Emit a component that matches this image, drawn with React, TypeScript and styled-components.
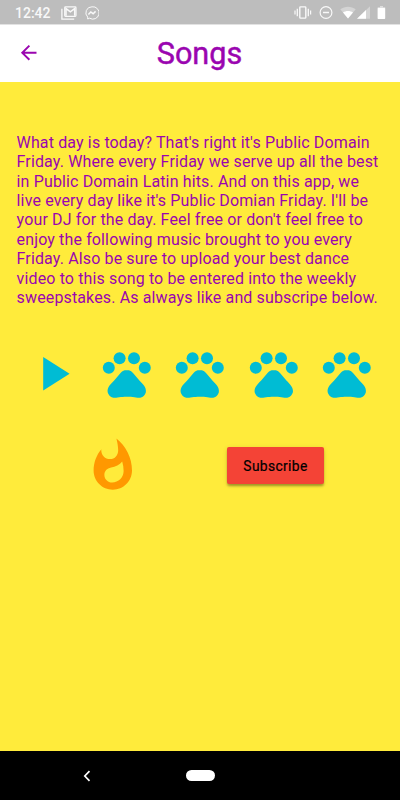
import React from "react";
import styled, { createGlobalStyle } from "styled-components";
import { MdArrowBack, MdPets, MdPlayArrow, MdWhatshot } from "react-icons/md";

const GlobalStyle = createGlobalStyle`
  * { box-sizing: border-box; }
  body { margin: 0; font-family: Roboto, sans-serif; }
`;

const Screen = styled.div`
  display: flex;
  flex-direction: column;
  width: 400px;
  height: 800px;
  overflow: hidden;
  background: #ffeb3b;
`;

const StatusBar = styled.div`
  display: flex;
  flex: none;
  align-items: center;
  height: 24px;
  padding: 1px 14px 0 15px;
  background: #bdbdbd;
  color: #fff;
`;

const Clock = styled.span`
  width: 46px;
  padding-top: 1px;
  font-size: 14px;
  font-weight: 500;
  line-height: 23px;
  opacity: 0.9;
`;

const StatusIcon = styled.svg<{ $gap?: number }>`
  display: block;
  flex: none;
  margin-left: ${({ $gap = 0 }) => $gap}px;
`;

const Spacer = styled.div`
  flex: 1;
`;

const AppBar = styled.header`
  display: grid;
  flex: none;
  grid-template-columns: 57px 1fr 58px;
  align-items: center;
  height: 57.6px;
  border-top: 1px solid #e2e2e2;
  background: #fff;
  color: #9a05b0;
`;

const BackButton = styled.div`
  display: flex;
  justify-content: center;
  margin-top: -1px;
  font-size: 23.4px;
`;

const Title = styled.h1`
  margin: 0;
  padding-top: 2px;
  text-align: center;
  font-size: 30.6px;
  font-weight: 400;
  line-height: 40px;
  -webkit-text-stroke: 0.45px #9a05b0;
`;

const Content = styled.main`
  flex: 1;
  padding: 51.4px 16.6px 0;
`;

const Intro = styled.p`
  margin: 0;
  color: #9a05b0;
  font-size: 16px;
  line-height: 19.37px;
  letter-spacing: 0.135px;
  white-space: nowrap;
`;

const Line = styled.span`
  display: block;
`;

const RatingRow = styled.div`
  display: flex;
  align-items: center;
  height: 58.4px;
  margin-top: 37px;
  color: #00bcd4;
  font-size: 57.6px;
`;

const Cell = styled.div`
  display: flex;
  flex: 1;
  justify-content: center;
`;

const ActionRow = styled.div`
  display: flex;
  align-items: center;
  height: 58.4px;
  margin-top: 33.4px;
  padding-left: 67.5px;
  color: #ff9800;
  font-size: 57.6px;
`;

const SubscribeButton = styled.button`
  width: 97px;
  height: 37px;
  margin: 0 0 0 85.3px;
  padding: 1px 0 0;
  border: 0;
  border-radius: 2px;
  background: #f44336;
  box-shadow: 0 2px 2px rgba(0, 0, 0, 0.14), 0 1px 5px rgba(0, 0, 0, 0.12), 0 3px 3px -1px rgba(0, 0, 0, 0.2);
  color: #000;
  font: 400 13.8px/36px Roboto, sans-serif;
  letter-spacing: 0.37px;
  -webkit-text-stroke: 0.2px #000;
`;

const NavBar = styled.nav`
  display: flex;
  flex: none;
  align-items: center;
  height: 49px;
  padding-left: 83px;
  background: #000;
`;

const HomePill = styled.div`
  width: 29px;
  height: 11px;
  margin-left: 95px;
  border-radius: 6px;
  background: #fff;
`;

const introLines = [
  "What day is today? That's right it's Public Domain",
  "Friday. Where every Friday we serve up all the best",
  "in Public Domain Latin hits. And on this app, we",
  "live every day like it's Public Domian Friday. I'll be",
  "your DJ for the day. Feel free or don't feel free to",
  "enjoy the following music brought to you every",
  "Friday. Also be sure to upload your best dance",
  "video to this song to be entered into the weekly",
  "sweepstakes. As always like and subscripe below.",
];

export default function App() {
  return (
    <Screen>
      <GlobalStyle />
      <StatusBar>
        <Clock>12:42</Clock>
        <StatusIcon width="16" height="14" viewBox="0 0 16 14" fill="none" stroke="#fff" strokeOpacity=".9">
          <path d="M.9 2.8v10.3h12.3" strokeWidth="1.3" />
          <rect x="3.7" y=".9" width="11.3" height="9.4" rx=".8" strokeWidth="1.2" />
          <path d="M5 9.7V2.6l4.35 3.3 4.35-3.3v7.1" strokeWidth="1.5" />
        </StatusIcon>
        <StatusIcon $gap={7.5} width="14" height="14" viewBox="0 0 14 14" fill="none" stroke="#fff" strokeOpacity=".9">
          <path d="M7 .8a6 6 0 0 0-4.3 10.3V13l1.9-.8A6.2 6.2 0 1 0 7 .8Z" strokeWidth="1" />
          <path d="m3.4 8.5 2.4-2.6 2.3 1.8 2.5-2.3" strokeWidth="1.5" />
        </StatusIcon>
        <Spacer />
        <StatusIcon width="18" height="13" viewBox="0 0 18 13" fill="none" stroke="#fff" strokeOpacity=".9">
          <rect x="5.8" y=".9" width="6" height="11.2" rx=".7" strokeWidth="1.4" />
          <path d="M3.3 2.7v7.6M14.3 2.7v7.6" strokeWidth="1.3" />
          <path d="M1 4.5v4M16.6 4.5v4" strokeWidth="1.2" />
        </StatusIcon>
        <StatusIcon $gap={7} width="14" height="14" viewBox="0 0 14 14" fill="none" stroke="#fff" strokeOpacity=".9">
          <circle cx="7" cy="6.5" r="5.9" strokeWidth="1.2" />
          <path d="M4 6.5h6" strokeWidth="1.5" />
        </StatusIcon>
        <StatusIcon $gap={7} width="16" height="13" viewBox="0 0 16 13" fill="#fff">
          <path d="M8 12.6.3 3.2C4.8-.2 11.2-.2 15.7 3.2Z" fillOpacity=".35" />
          <path d="M8 12.6 3 6.5c3-2 7-2 10 0Z" />
        </StatusIcon>
        <StatusIcon $gap={1} width="13" height="13" viewBox="0 0 13 13" fill="#fff">
          <path d="M0 12.7 13 .3v12.4Z" fillOpacity=".35" />
          <path d="M0 12.7 9 4v8.7Z" />
        </StatusIcon>
        <StatusIcon $gap={7} width="9" height="14" viewBox="0 0 9 14" fill="#fff">
          <path d="M3 0h3v1.2h2.2V2.5H.7V1.2H3Z" fillOpacity=".5" />
          <rect x=".6" y="2" width="7.6" height="11" rx=".7" />
        </StatusIcon>
      </StatusBar>

      <AppBar>
        <BackButton><MdArrowBack /></BackButton>
        <Title>Songs</Title>
      </AppBar>

      <Content>
        <Intro>
          {introLines.map((line) => <Line key={line}>{line}</Line>)}
        </Intro>
        <RatingRow>
          <Cell><MdPlayArrow /></Cell>
          {[1, 2, 3, 4].map((paw) => <Cell key={paw}><MdPets /></Cell>)}
        </RatingRow>
        <ActionRow>
          <MdWhatshot />
          <SubscribeButton>Subscribe</SubscribeButton>
        </ActionRow>
      </Content>

      <NavBar>
        <svg width="8" height="12" viewBox="0 0 8 12" fill="none" stroke="#fff" strokeWidth="1.7">
          <path d="M6.5 1.2 1.8 6l4.7 4.8" />
        </svg>
        <HomePill />
      </NavBar>
    </Screen>
  );
}
